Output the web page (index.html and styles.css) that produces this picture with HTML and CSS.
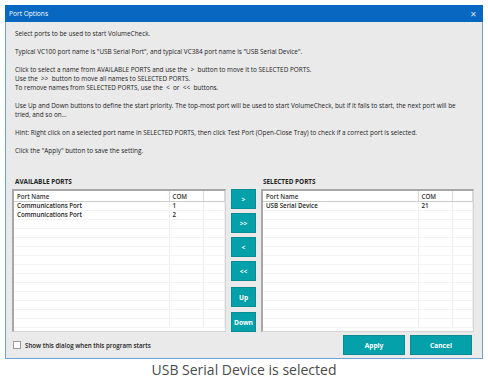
FILE: index.html
```html
<!DOCTYPE html>
<html lang="en">
<head>
    <meta charset="UTF-8">
    <title>Port Options</title>
    <link rel="stylesheet" href="styles.css">
</head>
<body>
    <div class="dialog">
        <div class="titlebar">
            <span>Port Options</span>
            <span class="close">&#x2715;</span>
        </div>
        <div class="content">
            <div class="intro">
                <p>Select ports to be used to start VolumeCheck.</p>
                <p>Typical VC100 port name is "USB Serial Port", and typical VC384 port name is "USB Serial Device".</p>
                <p>Click to select a name from AVAILABLE PORTS and use the &nbsp;&gt;&nbsp; button to move it to SELECTED PORTS.<br>
                   Use the &nbsp;&gt;&gt;&nbsp; button to move all names to SELECTED PORTS.<br>
                   To remove names from SELECTED PORTS, use the &nbsp;&lt;&nbsp; or &nbsp;&lt;&lt;&nbsp; buttons.</p>
                <p>Use Up and Down buttons to define the start priority. The top-most port will be used to start VolumeCheck, but if it fails to start, the next port will be tried, and so on...</p>
                <p>Hint: Right click on a selected port name in SELECTED PORTS, then click Test Port (Open-Close Tray) to check if a correct port is selected.</p>
                <p>Click the "Apply" button to save the setting.</p>
            </div>

            <div class="ports">
                <div class="label">AVAILABLE PORTS</div>
                <div></div>
                <div class="label sel-label">SELECTED PORTS</div>

                <div class="list">
                    <table>
                        <colgroup><col class="c-name"><col class="c-com"><col></colgroup>
                        <tr><th>Port Name</th><th>COM</th><th></th></tr>
                        <tr><td>Communications Port</td><td>1</td><td></td></tr>
                        <tr><td>Communications Port</td><td>2</td><td></td></tr>
                        <tr><td></td><td></td><td></td></tr>
                        <tr><td></td><td></td><td></td></tr>
                        <tr><td></td><td></td><td></td></tr>
                        <tr><td></td><td></td><td></td></tr>
                        <tr><td></td><td></td><td></td></tr>
                        <tr><td></td><td></td><td></td></tr>
                        <tr><td></td><td></td><td></td></tr>
                        <tr><td></td><td></td><td></td></tr>
                        <tr><td></td><td></td><td></td></tr>
                        <tr><td></td><td></td><td></td></tr>
                        <tr><td></td><td></td><td></td></tr>
                        <tr><td></td><td></td><td></td></tr>
                    </table>
                </div>

                <div class="moves">
                    <button class="btn">&gt;</button>
                    <button class="btn">&gt;&gt;</button>
                    <button class="btn">&lt;</button>
                    <button class="btn">&lt;&lt;</button>
                    <button class="btn up">Up</button>
                    <button class="btn down">Down</button>
                </div>

                <div class="list">
                    <table>
                        <colgroup><col class="c-name"><col class="c-com"><col></colgroup>
                        <tr><th>Port Name</th><th>COM</th><th></th></tr>
                        <tr><td>USB Serial Device</td><td>21</td><td></td></tr>
                        <tr><td></td><td></td><td></td></tr>
                        <tr><td></td><td></td><td></td></tr>
                        <tr><td></td><td></td><td></td></tr>
                        <tr><td></td><td></td><td></td></tr>
                        <tr><td></td><td></td><td></td></tr>
                        <tr><td></td><td></td><td></td></tr>
                        <tr><td></td><td></td><td></td></tr>
                        <tr><td></td><td></td><td></td></tr>
                        <tr><td></td><td></td><td></td></tr>
                        <tr><td></td><td></td><td></td></tr>
                        <tr><td></td><td></td><td></td></tr>
                        <tr><td></td><td></td><td></td></tr>
                        <tr><td></td><td></td><td></td></tr>
                    </table>
                </div>
            </div>

            <div class="footer">
                <label class="check"><span class="box"></span>Show this dialog when this program starts</label>
                <div class="actions">
                    <button class="btn wide">Apply</button>
                    <button class="btn wide">Cancel</button>
                </div>
            </div>
        </div>
    </div>
    <p class="caption">USB Serial Device is selected</p>
</body>
</html>
```

FILE: styles.css
```css
body {
    margin: 0;
    background-color: #fff;
    font-family: "Open Sans", "Noto Sans", sans-serif;
}
.dialog {
    margin: 5px 0 0 5px;
    width: 476px;
    border: 1px solid #6ea3d8;
    border-top: none;
    background-color: #eaeaea;
}
.titlebar {
    height: 17px;
    margin: 0 -1px;
    padding: 0 6px 0 4px;
    background-color: #0767c1;
    color: #fff;
    font-size: 6.6px;
    display: flex;
    align-items: center;
    justify-content: space-between;
}
.close {
    font-size: 8px;
    color: #d6e4f3;
}
.content {
    padding: 7px 8px 3px 6px;
}
.intro {
    padding: 0 10px 0 3px;
    font-size: 6.4px;
    line-height: 9px;
    color: #222;
}
.intro p {
    margin: 0 0 9px 0;
}
.ports {
    margin-top: 22px;
    display: grid;
    grid-template-columns: 214px 25px 213px;
    column-gap: 5px;
}
.label {
    font-size: 6.4px;
    font-weight: 700;
    color: #222;
    padding-left: 3px;
    height: 12px;
}
.sel-label {
    padding-left: 2px;
}
.list {
    height: 140px;
    background-color: #fff;
    border: 1px solid #d4d4d4;
    border-top: 2px solid #a8a8a8;
    border-left: 2px solid #a8a8a8;
    overflow: hidden;
}
table {
    width: 100%;
    border-collapse: collapse;
    table-layout: fixed;
    font-size: 6.2px;
    font-weight: 600;
    color: #222;
}
.c-name {
    width: 155px;
}
.c-com {
    width: 34px;
}
th {
    height: 10px;
    padding: 0 0 0 3px;
    text-align: left;
    font-weight: 600;
    color: #333;
    border-right: 1px solid #d8d8d8;
    border-bottom: 1px solid #cdcdcd;
}
td {
    height: 8px;
    padding: 0 0 0 3px;
    line-height: 8px;
    border-right: 1px solid #efefef;
    border-bottom: 1px solid #f3f3f3;
    white-space: nowrap;
}
.moves {
    display: flex;
    flex-direction: column;
    gap: 4px;
}
.btn {
    height: 20px;
    padding: 0;
    background-color: #05a1aa;
    border: 1px solid #0b8c94;
    color: #fff;
    font-family: "Open Sans", "Noto Sans", sans-serif;
    font-size: 6.6px;
    font-weight: 700;
}
.moves .up {
    margin-top: 2px;
}
.moves .down {
    margin-top: 1px;
}
.footer {
    display: flex;
    justify-content: space-between;
    align-items: center;
    margin-top: 3px;
}
.check {
    display: flex;
    align-items: center;
    gap: 4px;
    padding-left: 1px;
    font-size: 6.2px;
    font-weight: 600;
    color: #222;
}
.box {
    width: 6px;
    height: 6px;
    background-color: #fff;
    border: 1px solid #9a9a9a;
}
.actions {
    display: flex;
    gap: 5px;
    margin-right: 2px;
}
.wide {
    width: 62px;
    height: 20px;
}
.caption {
    margin: 1px 0 0 0;
    text-align: center;
    font-size: 14px;
    color: #4a4a4a;
}
```
